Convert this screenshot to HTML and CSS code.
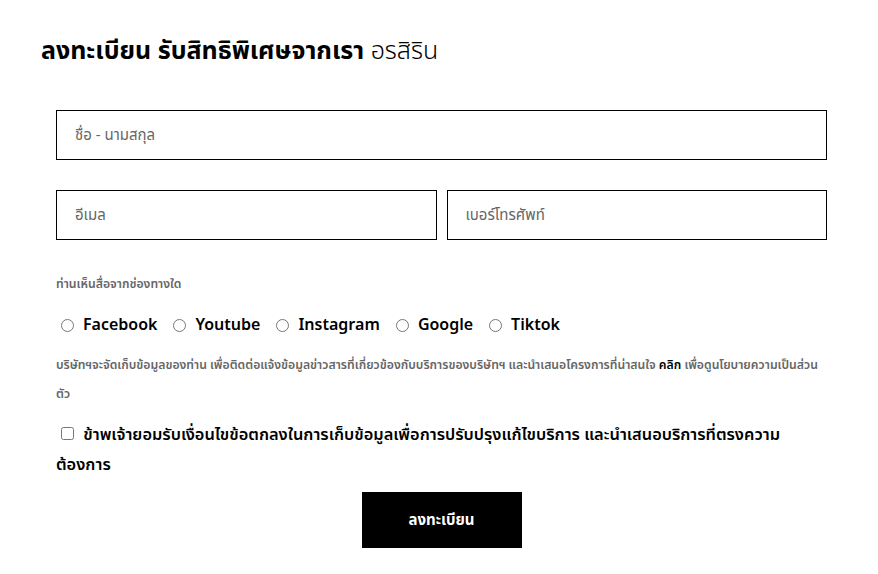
FILE: index.html
```html
<!DOCTYPE html>
<html lang="th">
<head>
    <meta charset="UTF-8">
    <meta name="viewport" content="width=device-width, initial-scale=1.0">
    <title>ลงทะเบียน</title>
    <link rel="stylesheet" href="styles.css">
</head>
<body>
    <div class="page">
        <h2 class="title">ลงทะเบียน รับสิทธิพิเศษจากเรา <span class="light">อรสิริน</span></h2>

        <form class="regform">
            <div class="row">
                <input type="text" class="field" placeholder="ชื่อ - นามสกุล">
            </div>
            <div class="row two">
                <input type="email" class="field" placeholder="อีเมล">
                <input type="tel" class="field" placeholder="เบอร์โทรศัพท์">
            </div>

            <p class="small-label">ท่านเห็นสื่อจากช่องทางใด</p>
            <div class="radios">
                <label><input type="radio" name="media"> Facebook</label>
                <label><input type="radio" name="media"> Youtube</label>
                <label><input type="radio" name="media"> Instagram</label>
                <label><input type="radio" name="media"> Google</label>
                <label><input type="radio" name="media"> Tiktok</label>
            </div>

            <p class="privacy">บริษัทฯจะจัดเก็บข้อมูลของท่าน เพื่อติดต่อแจ้งข้อมูลข่าวสารที่เกี่ยวข้องกับบริการของบริษัทฯ และนำเสนอโครงการที่น่าสนใจ <a href="#">คลิก</a> เพื่อดูนโยบายความเป็นส่วน<wbr>ตัว</p>

            <label class="consent"><input type="checkbox"> ข้าพเจ้ายอมรับเงื่อนไขข้อตกลงในการเก็บข้อมูลเพื่อการปรับปรุงแก้ไขบริการ และนำเสนอบริการที่ตรงความต้องการ</label>

            <div class="actions">
                <button type="button" class="submit">ลงทะเบียน</button>
            </div>
        </form>
    </div>
</body>
</html>
```

FILE: styles.css
```css
body {
    margin: 0;
    font-family: "Noto Sans Thai", "Noto Sans", sans-serif;
    color: #000;
    background: #fff;
}

.page {
    padding: 32px 0 0 41px;
}

/* heading */
.title {
    margin: 0;
    font-size: 25px;
    font-weight: 700;
    line-height: 38px;
}

.title .light {
    font-weight: 300;
}

.regform {
    width: 771px;
    margin: 40px 0 0 15px;
}

.row {
    display: flex;
    gap: 10px;
    margin-bottom: 30px;
}

.field {
    flex: 1;
    min-width: 0;
    height: 50px;
    box-sizing: border-box;
    border: 1px solid #000;
    padding: 0 18px;
    font-family: inherit;
    font-size: 15px;
    outline: none;
}

.field::placeholder {
    color: #666;
}

.small-label {
    margin: 35px 0 0;
    font-size: 12.2px;
    font-weight: 600;
    color: #666;
}

/* radio list */
.radios {
    display: flex;
    gap: 16px;
    margin-top: 20px;
    padding-left: 5px;
}

.radios label {
    display: flex;
    align-items: center;
    font-size: 16px;
    font-weight: 600;
}

.radios input {
    margin: 0 9px 0 0;
    width: 13px;
    height: 13px;
}

.privacy {
    margin: 14px 0 0;
    font-size: 12.2px;
    font-weight: 600;
    line-height: 29px;
    color: #666;
}

.privacy a {
    color: #000;
    text-decoration: none;
}

.consent {
    display: block;
    margin-top: 11px;
    padding-right: 20px;
    font-size: 16.4px;
    font-weight: 600;
    line-height: 30px;
}

.consent input {
    margin: 0 5px 0 5px;
    width: 13px;
    height: 13px;
}

.actions {
    display: flex;
    justify-content: center;
    margin-top: 12px;
}

.submit {
    width: 160px;
    height: 56px;
    border: none;
    background: #000;
    color: #fff;
    font-family: inherit;
    font-size: 15px;
    font-weight: 700;
    cursor: pointer;
}
```
